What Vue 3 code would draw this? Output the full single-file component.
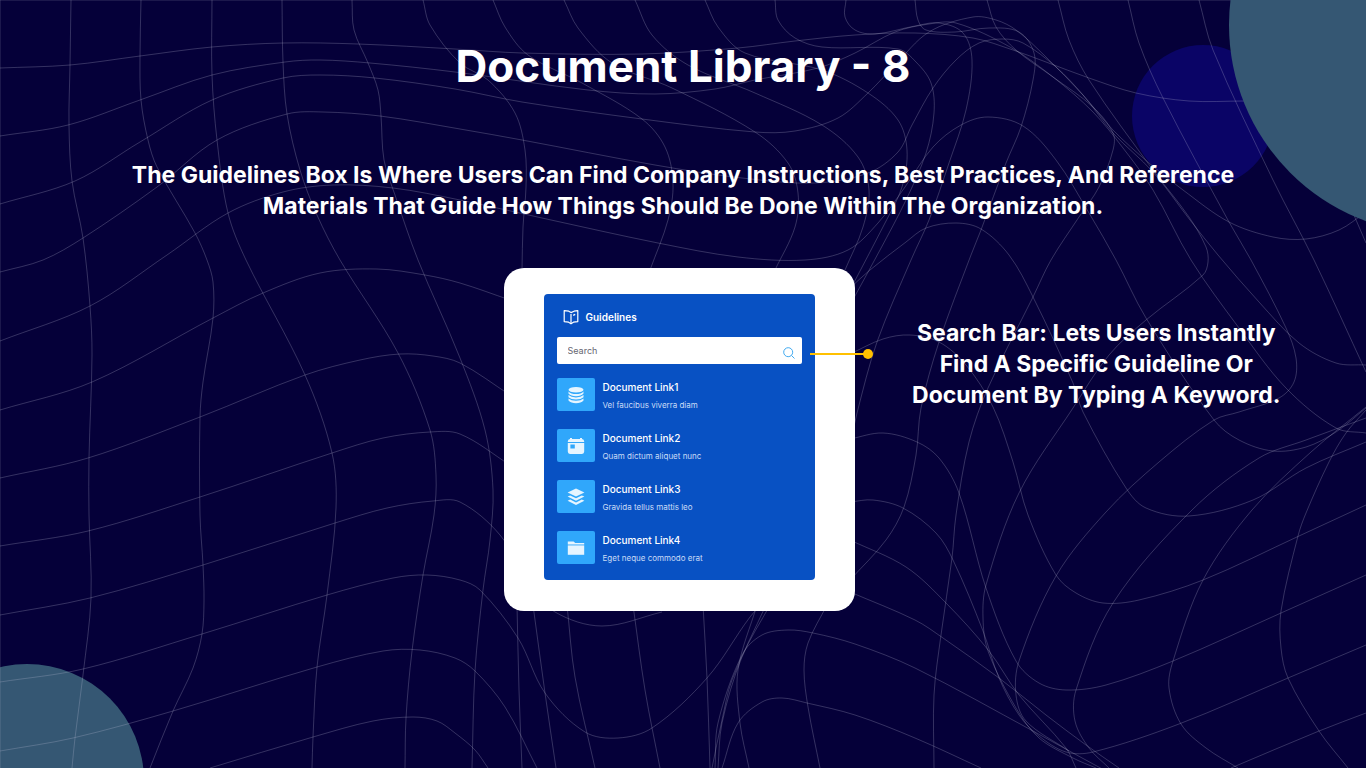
<template>
  <div class="page">
    <!-- decorative background -->
    <svg class="backdrop" viewBox="0 0 1366 768" preserveAspectRatio="xMidYMid slice" aria-hidden="true">
      <circle class="circle-teal" cx="27" cy="781" r="117" />
      <circle class="circle-blue" cx="1203" cy="116" r="71" />
      <g class="mesh">
        <path v-for="(path, index) in meshPaths" :key="index" :d="path" />
      </g>
      <circle class="circle-teal" cx="1438" cy="25" r="209" />
    </svg>

    <header class="intro">
      <h1>Document Library - 8</h1>
      <p>
        The Guidelines Box Is Where Users Can Find Company Instructions, Best Practices, And Reference
        Materials That Guide How Things Should Be Done Within The Organization.
      </p>
    </header>

    <main class="showcase">
      <div class="card">
        <section class="panel">
          <h2 class="panel-title">
            <svg class="book-icon" viewBox="0 0 16 16" aria-hidden="true">
              <path d="M8 3.6 L5.8 2.2 L1.2 1.6 L1.2 12.6 L5.6 13.2 L8 14.8 L10.4 13.2 L14.8 12.6 L14.8 1.6 L11 2.2 Z" />
              <path d="M8 5 L8 14.4 M10.2 6.4 L12.2 5.4" />
            </svg>
            Guidelines
          </h2>

          <form class="search" @submit.prevent>
            <input v-model="keyword" type="text" placeholder="Search" aria-label="Search guidelines" />
            <button type="submit" aria-label="Search">
              <svg viewBox="0 0 12 12" aria-hidden="true">
                <circle cx="5.2" cy="5.2" r="4.5" />
                <path d="M8.4 8.4 L11.5 11.5" />
              </svg>
            </button>
            <span class="pointer"></span>
          </form>

          <ul class="links">
            <li v-for="item in documents" :key="item.title">
              <a href="#" class="link">
                <span class="tile">
                  <svg v-if="item.icon === 'database'" viewBox="0 0 18 18" aria-hidden="true">
                    <ellipse cx="9" cy="3.8" rx="7.5" ry="2.8" />
                    <path d="M1.5 5.4 Q4 8 9 8 Q14 8 16.5 5.4 V7.6 Q14 10.2 9 10.2 Q4 10.2 1.5 7.6 Z" />
                    <path d="M1.5 9 Q4 11.4 9 11.4 Q14 11.4 16.5 9 V11.2 Q14 13.6 9 13.6 Q4 13.6 1.5 11.2 Z" />
                    <path d="M1.5 12.6 Q4 14.8 9 14.8 Q14 14.8 16.5 12.6 V14.6 Q14 17.2 9 17.2 Q4 17.2 1.5 14.6 Z" />
                  </svg>
                  <svg v-else-if="item.icon === 'calendar'" viewBox="0 0 18 18" aria-hidden="true">
                    <path d="M3 2 V1 H5 V2 H13 V1 H15 V2 Q17.2 2.2 17.2 4.4 V5 H0.8 V4.4 Q0.8 2.2 3 2 Z" />
                    <path fill-rule="evenodd" d="M0.8 6 H17.2 V14.6 Q17.2 17 15 17 H3 Q0.8 17 0.8 14.6 Z M3.4 7.4 V11.6 H7.8 V7.4 Z" />
                  </svg>
                  <svg v-else-if="item.icon === 'layers'" viewBox="0 0 18 18" aria-hidden="true">
                    <path d="M9 0.6 L17.4 4.6 L9 8.6 L0.6 4.6 Z" />
                    <path d="M0.6 8.6 L3.2 7.4 L9 10.2 L14.8 7.4 L17.4 8.6 L9 12.8 Z" />
                    <path d="M0.6 12.8 L3.2 11.6 L9 14.4 L14.8 11.6 L17.4 12.8 L9 17 Z" />
                  </svg>
                  <svg v-else viewBox="0 0 18 18" aria-hidden="true">
                    <path d="M0.8 2.4 H6.6 L8.2 4 H17.2 V5.4 H0.8 Z" />
                    <path d="M0.8 6.4 H17.2 V15.8 H0.8 Z" />
                  </svg>
                </span>
                <span class="link-text">
                  <span class="link-title">{{ item.title }}</span>
                  <span class="link-note">{{ item.note }}</span>
                </span>
              </a>
            </li>
          </ul>
        </section>
      </div>

      <p class="callout">
        Search Bar: Lets Users Instantly Find A Specific Guideline Or Document By Typing A Keyword.
      </p>
    </main>
  </div>
</template>

<script setup>
import { computed, ref } from 'vue'

const keyword = ref('')

const documents = [
  { title: 'Document Link1', note: 'Vel faucibus viverra diam', icon: 'database' },
  { title: 'Document Link2', note: 'Quam dictum aliquet nunc', icon: 'calendar' },
  { title: 'Document Link3', note: 'Gravida tellus mattis leo', icon: 'layers' },
  { title: 'Document Link4', note: 'Eget neque commodo erat', icon: 'folder' }
]

// Points each mesh line runs through
const meshLines = [
  // edges
  '0,0 0,768',
  '0,0 1366,0',
  // across
  '0,68 70,65 140,56 212,47 283,43 358,44 455,49 522,53 642,54 738,48 795,41 855,35 915,33 973,38 1013,50 1046,62 1089,78 1136,93 1189,101 1244,101',
  '0,136 68,125 140,100 212,75 285,62 320,60 370,63 455,72 588,90 655,94 715,89 755,80 818,68 855,53 895,32 929,24 956,23 1010,47 1053,77 1093,112 1123,148 1153,190 1191,260 1239,328 1286,388 1336,428 1366,433',
  '0,204 75,181 140,142 212,100 283,78 320,75 375,78 455,89 522,102 642,119 755,132 795,131 838,118 868,93 895,65 929,32 973,17 996,20 1016,30 1046,57 1083,95 1113,130 1149,163 1183,190 1229,222 1273,237 1306,239 1339,230 1366,212',
  '0,272 43,260 83,238 157,187 217,140 287,114 323,112 380,116 460,129 522,140 655,165 742,178 815,183 868,173 898,152 912,125 933,88 956,60 979,43 1003,39 1023,43 1056,67 1083,95 1113,133 1153,172 1190,220 1218,255 1259,302 1299,343 1336,363 1366,365',
  '0,341 90,306 167,255 228,213 283,192 333,185 393,188 460,200 542,218 658,243 738,257 805,260 848,250 878,223 905,187 933,147 961,125 988,117 1023,126 1056,160 1089,213 1116,260 1146,318 1214,420 1239,440 1273,451 1306,447 1336,432 1366,408',
  '0,410 92,382 213,318 263,293 320,273 377,269 425,275 460,283 510,300',
  '850,288 870,270 906,242 926,228 956,223 981,229 1009,255 1033,297 1073,383 1083,412 1126,488 1146,508 1189,516 1253,500 1306,468 1366,442',
  '0,478 88,458 200,417 305,375 360,360 400,354 433,356 460,363 510,395',
  '850,354 883,339 910,335 939,342 966,365 993,407 1013,462 1028,515 1056,575 1076,593 1103,603 1139,600 1203,580 1299,536 1366,505',
  '0,546 88,531 200,497 332,453 383,438 430,432 460,434 510,465',
  '850,439 883,433 917,442 939,458 959,493 986,588 1016,661 1039,683 1066,690 1106,685 1173,661 1281,613 1366,575',
  '0,615 90,598 203,565 335,523 387,508 433,501 460,502 500,535 530,585 555,612 602,626 662,612',
  '850,502 873,500 903,508 936,533 953,560 983,631 999,678 1019,715 1039,736 1066,752 1093,752 1179,724 1288,678 1366,645',
  '0,682 83,669 202,634 327,595 393,578 427,575 460,580 480,590 518,638 545,693 585,732 618,738 652,728 707,678 750,617 766,600',
  '850,540 906,567 946,603 989,651 1019,695 1066,748 1076,768',
  '0,751 73,738 173,711 317,667 383,651 420,650 455,658 475,671 505,707 537,768',
  '210,768 313,737 373,721 413,717 437,721 455,733 475,750 488,768',
  '850,592 915,620 943,638 999,678 1046,715 1086,745 1119,768',
  '715,768 718,723 742,655 762,635 788,630 813,633 855,644 915,668 1033,731 1073,753 1106,771',
  '722,768 738,723 762,702 782,698 807,703 855,715 915,738 981,768',
  '1231,768 1319,731 1366,713',
  // down
  '71,0 70,65 69,125 72,181 83,238 90,306 92,355 89,458 89,515 91,598 83,675 75,738 72,768',
  '141,0 140,56 141,100 148,140 157,167 195,233 207,260 213,282 213,318 203,382 200,417 200,515 203,565 204,601 202,634 193,668 173,711 150,768',
  '212,0 212,75 217,140 228,213 246,260 305,375 332,453 336,508 327,595 317,667 313,737 312,768',
  '282,0 283,62 287,114 300,170 317,215 340,260 398,353 430,430 436,475 434,515 423,575 412,651 406,718 405,768',
  '352,0 354,30 368,63 378,90 381,116 384,160 395,195 418,260 460,358 485,430 493,490 490,540 483,590 475,671 472,768',
  '423,0 430,25 460,63 488,80 515,113 525,150 526,187 523,227 522,270',
  '493,0 505,27 528,55 582,83 642,119 665,147 673,183 668,220 650,270',
  '564,0 578,28 612,63 672,88 755,132 788,163 798,193 795,227 775,270',
  '635,0 652,35 688,65 755,93 822,125 858,157 869,190 863,227 845,270',
  '705,0 718,27 745,53 822,70 868,93 898,120 907,150 902,187 885,223 850,290',
  '775,0 778,20 795,38 822,47 898,49 916,62 931,83 934,113 926,153 906,200 880,250 850,305',
  '846,0 845,17 855,30 875,34 915,26 939,23 963,33 972,60 966,110 949,163 929,220 911,260 877,342 857,413 850,445',
  '915,0 918,20 926,30 955,32 989,28 1019,32 1034,53 1033,80 1021,127 1006,163 981,230 971,255 939,342 921,408 916,455 904,507 886,540 850,580',
  '987,0 996,27 1016,50 1053,77 1093,107 1113,133 1113,150 1099,187 1079,217 1051,260 1033,297 988,388 969,442 956,515 952,558 941,635 934,695 934,768',
  '1058,0 1069,40 1089,80 1153,170 1189,217 1206,247 1208,262 1203,275 1146,320 1109,355 1073,408 1019,493 986,585 983,618 988,651 1016,708 1039,738 1073,758 1096,768',
  '1128,0 1139,43 1163,98 1229,222 1251,260 1286,328 1296,358 1294,382 1279,398 1239,412 1214,420 1159,462 1106,512 1056,576 1019,661 1016,695 1026,721 1069,751',
  '1199,0 1213,50 1273,180 1314,260 1366,372',
  '1366,418 1306,440 1259,458 1192,510 1113,603 1076,690 1075,721 1089,748 1109,768',
  '1366,407 1311,452 1252,510 1203,580 1173,661 1169,688 1181,724 1206,748 1238,768',
  '1366,410 1346,433 1329,462 1306,513 1298,536 1281,611 1281,648 1288,678 1319,731 1348,768',
  '1350,206 1366,243',
  // below the card
  '517,605 519,690 522,768',
  '533,605 545,693 556,768',
  '567,605 575,677 595,768',
  '633,605 645,690 660,768',
  '703,605 707,678 710,768',
  '757,605 738,670 740,723 749,768',
  '770,605 742,657 722,723 718,768',
  '766,605 732,680 722,720 712,768',
  '827,605 808,643 804,670 808,707 820,768'
]

// Smooth curve through all points of a line, handles scaled to each segment
const toCurve = (line) => {
  const points = line.split(' ').map((pair) => pair.split(',').map(Number))
  const tangents = points.map((point, i) => {
    const before = points[i - 1] || point
    const after = points[i + 1] || point
    const dx = after[0] - before[0]
    const dy = after[1] - before[1]
    const length = Math.hypot(dx, dy)
    return [dx / length, dy / length]
  })
  let path = `M${points[0].join(' ')}`
  for (let i = 0; i < points.length - 1; i++) {
    const [x1, y1] = points[i]
    const [x2, y2] = points[i + 1]
    const reach = Math.hypot(x2 - x1, y2 - y1) / 3
    const c1 = [x1 + tangents[i][0] * reach, y1 + tangents[i][1] * reach]
    const c2 = [x2 - tangents[i + 1][0] * reach, y2 - tangents[i + 1][1] * reach]
    path += `C${c1.join(' ')} ${c2.join(' ')} ${x2} ${y2}`
  }
  return path
}

const meshPaths = computed(() => meshLines.map(toCurve))
</script>

<style>
body {
  margin: 0;
  background: #050039;
}
</style>

<style scoped>
.page {
  position: relative;
  min-height: 100vh;
  box-sizing: border-box;
  overflow: hidden;
  background: #050039;
  color: #fff;
  font-family: Inter, "Liberation Sans", sans-serif;
}

.backdrop {
  position: absolute;
  inset: 0;
  width: 100%;
  height: 100%;
}

.circle-teal {
  fill: #355773;
}

.circle-blue {
  fill: #0a0466;
}

.mesh path {
  fill: none;
  stroke: #c4c2dc;
  stroke-opacity: 0.25;
  stroke-width: 1;
}

.intro {
  position: relative;
  padding: 40px 100px 0;
  text-align: center;
}

.intro h1 {
  margin: 0;
  font-size: 44px;
  line-height: 52px;
  font-weight: 700;
}

.intro p {
  margin: 68px 0 0;
  font-size: 23px;
  line-height: 31px;
  font-weight: 700;
}

.showcase {
  position: relative;
  display: grid;
  grid-template-columns: 1fr 351px 1fr;
  align-items: start;
  margin-top: 46px;
  padding: 0 80px 40px 72px;
}

.card {
  grid-column: 2;
  box-sizing: border-box;
  padding: 26px 40px 31px;
  background: #fff;
  border-radius: 20px;
}

.panel {
  padding: 12px 13px 13px;
  background: #0851c3;
  border-radius: 4px;
}

.panel-title {
  display: flex;
  align-items: center;
  gap: 7px;
  margin: 0 0 9px;
  padding-left: 6px;
  font-size: 10px;
  line-height: 22px;
  font-weight: 600;
}

.book-icon {
  width: 16px;
  height: 16px;
  fill: none;
  stroke: #fff;
  stroke-width: 1.2;
  stroke-linejoin: round;
}

.search {
  position: relative;
  display: flex;
  height: 27px;
  background: #fff;
  border-radius: 2px;
}

.search input {
  flex: 1;
  min-width: 0;
  padding: 0 11px;
  border: 0;
  outline: 0;
  background: none;
  color: #333;
  font: 400 9px/27px Inter, "Liberation Sans", sans-serif;
}

.search input::placeholder {
  color: #666670;
  opacity: 1;
}

.search button {
  display: flex;
  align-items: center;
  padding: 5px 7px 0 0;
  border: 0;
  background: none;
  cursor: pointer;
}

.search button svg {
  width: 12px;
  height: 12px;
  fill: none;
  stroke: #42aaf0;
  stroke-width: 1;
}

/* line from the search box to the callout */
.pointer {
  position: absolute;
  top: 16px;
  left: 100%;
  width: 58px;
  height: 2px;
  margin-left: 8px;
  background: #ffc000;
}

.pointer::after {
  content: "";
  position: absolute;
  top: -4px;
  right: -5px;
  width: 10px;
  height: 10px;
  border-radius: 50%;
  background: #ffc000;
}

.links {
  display: grid;
  gap: 15px;
  margin: 14px 0 0;
  padding: 0;
  list-style: none;
}

.link {
  display: flex;
  gap: 8px;
  color: #fff;
  text-decoration: none;
}

.tile {
  display: flex;
  align-items: center;
  justify-content: center;
  width: 38px;
  height: 33px;
  background: #30a7fb;
  border-radius: 2px;
}

.tile svg {
  width: 18px;
  height: 18px;
  fill: #e6f5ff;
}

.link-text {
  display: flex;
  flex-direction: column;
}

.link-title {
  font-size: 10px;
  line-height: 18px;
  font-weight: 500;
}

.link-note {
  color: #c9dcf7;
  font-size: 8px;
  line-height: 18px;
}

.callout {
  margin: 50px 0 0;
  padding-left: 52px;
  font-size: 23px;
  line-height: 31px;
  font-weight: 700;
  text-align: center;
}
</style>
